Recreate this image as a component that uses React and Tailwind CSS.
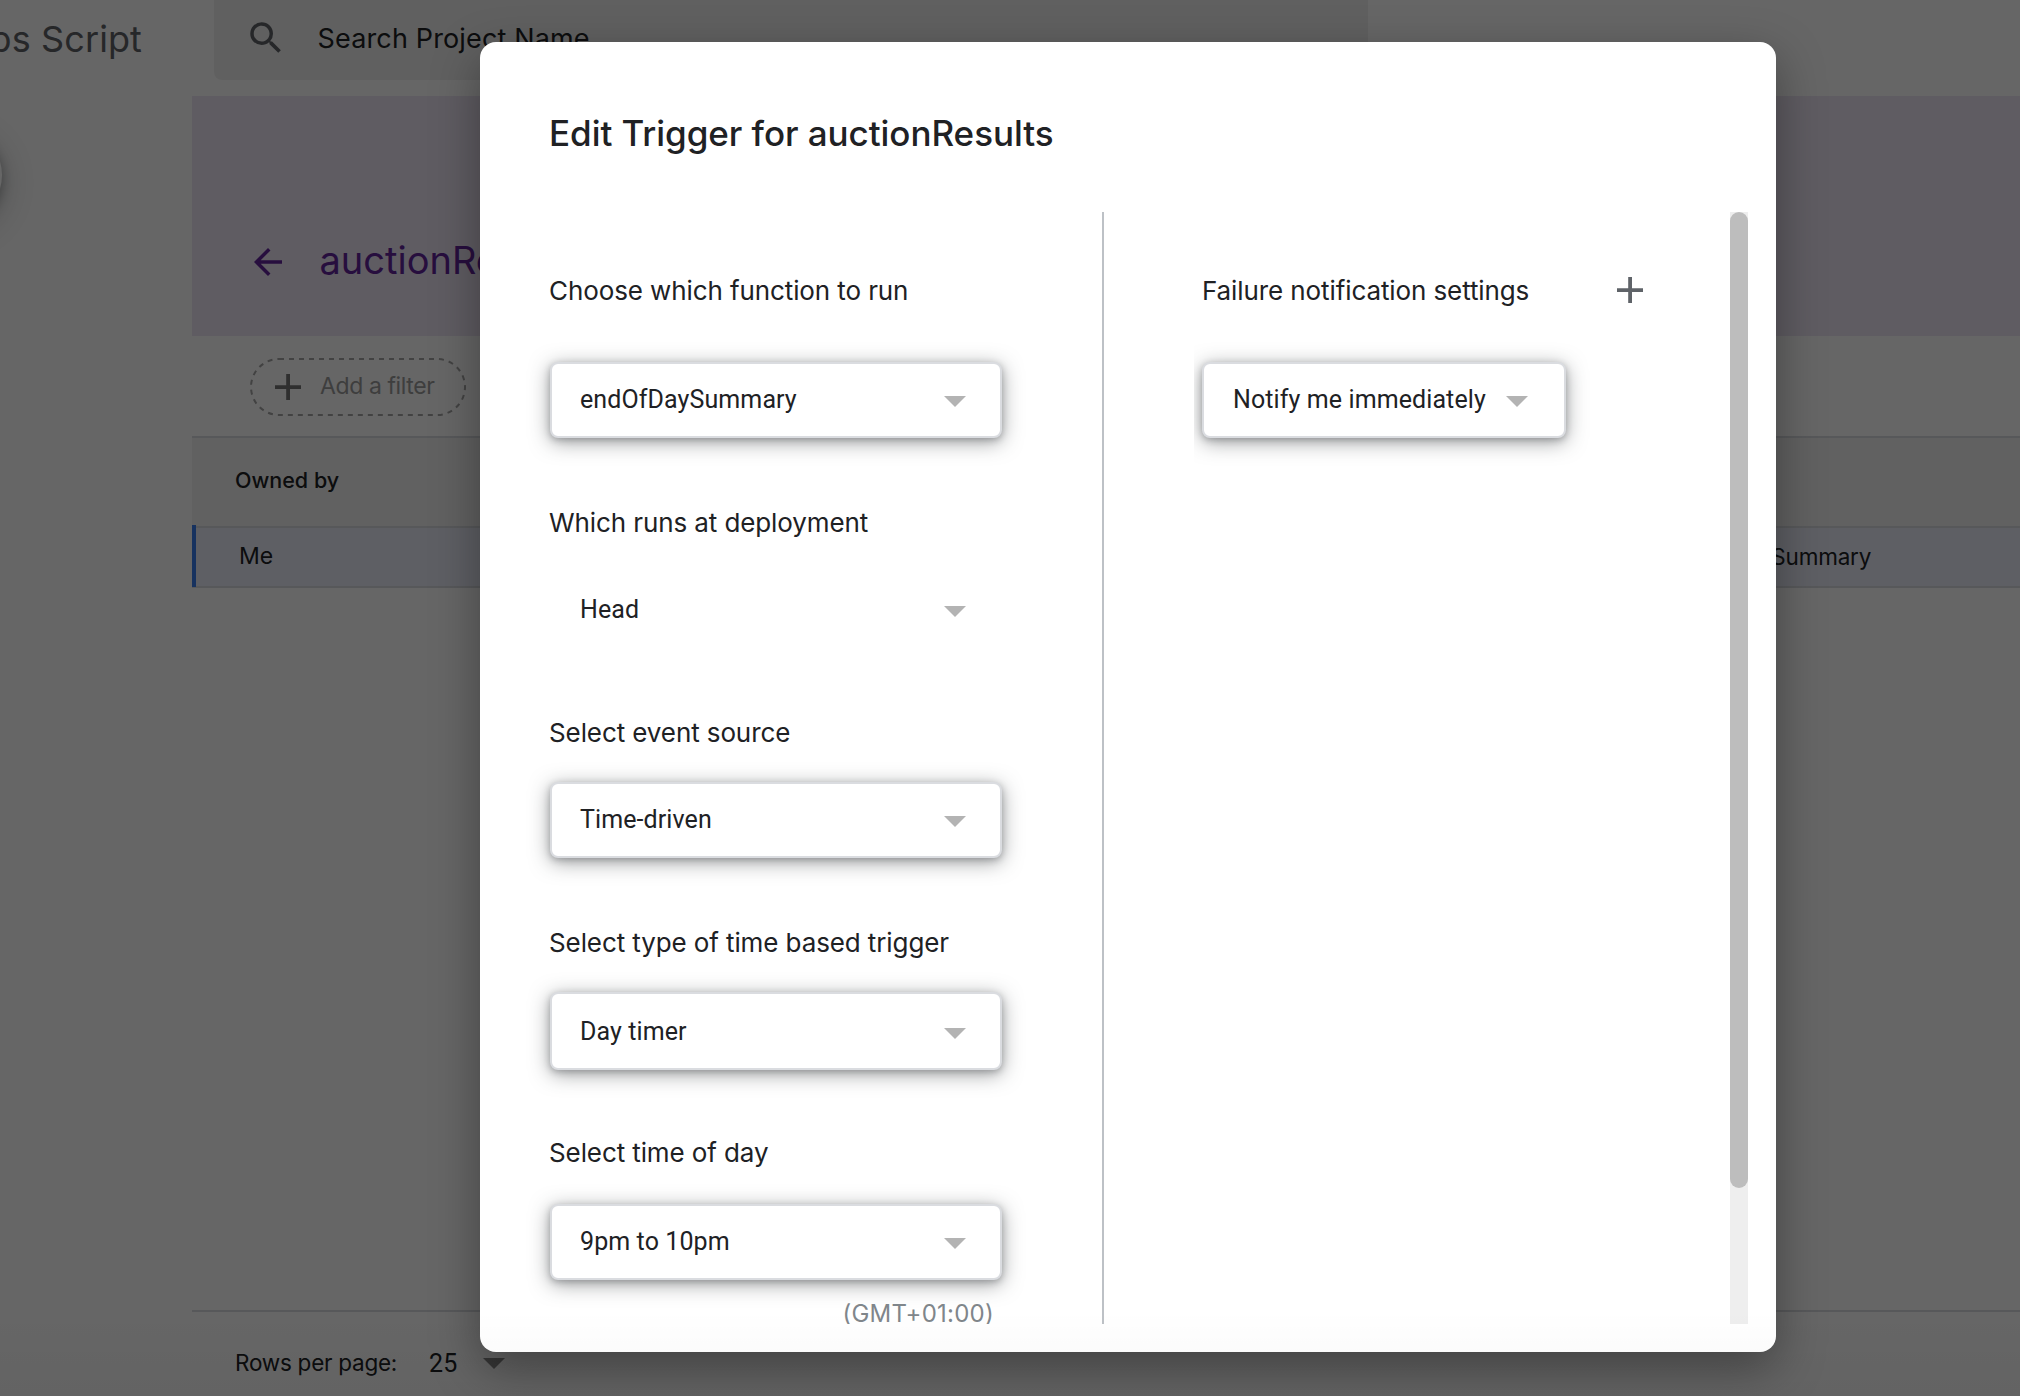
function Caret({ className }) {
  return (
    <svg className={className} width="22" height="11" viewBox="0 0 22 11">
      <path d="M0 0h22L11 11z" fill="currentColor" />
    </svg>
  );
}

function Plus({ className }) {
  return (
    <svg className={className} width="26" height="26" viewBox="0 0 26 26">
      <path d="M11.2 0h3.8v11.2h11V15H15v11h-3.8V15H0v-3.8h11.2z" fill="currentColor" />
    </svg>
  );
}

function Select({ value, flat, className }) {
  return (
    <div
      className={`flex items-center justify-between rounded-lg border-2 font-[Roboto,sans-serif] text-[25px] leading-[40px] tracking-[0.1px] text-[#202124] ${
        flat
          ? "border-transparent"
          : "border-[#dadce0] bg-white shadow-[0_2px_6px_rgba(60,64,67,0.3),0_4px_20px_rgba(60,64,67,0.5)]"
      } ${className}`}
    >
      <span>{value}</span>
      <Caret className="mt-[3px] text-[#b3b3b3]" />
    </div>
  );
}

const labelClass =
  "h-[41px] text-[26px] leading-[41px] tracking-[-0.1px] whitespace-nowrap text-[#202124]";

const fields = [
  { label: "Choose which function to run", value: "endOfDaySummary", field: "pt-[58px]", select: "mt-[51px] h-[76px]" },
  { label: "Which runs at deployment", value: "Head", flat: true, field: "pt-[64px]", select: "mt-[29px] h-[76px]" },
  { label: "Select event source", value: "Time-driven", field: "pt-[64px]", select: "mt-[29px] h-[76px]" },
  { label: "Select type of time based trigger", value: "Day timer", field: "pt-[64px]", select: "mt-[29px] h-[78px] pt-[2px]" },
  { label: "Select time of day", value: "9pm to 10pm", field: "pt-[62px]", select: "mt-[31px] h-[76px]" },
];

function Background() {
  return (
    <div className="flex h-full flex-col bg-white">
      <header className="flex h-24 shrink-0 items-start">
        <div className="flex h-20 w-[214px] items-center justify-end pr-[72px] pb-[3px] text-[36px] tracking-[0.1px] whitespace-nowrap text-[#5f6368]">
          Apps Script
        </div>
        <div className="flex h-20 w-[1154px] items-center rounded-b-lg bg-[#f1f1f1] pb-[3px] pl-[31px]">
          <svg width="42" height="42" viewBox="0 0 24 24" className="-mt-px text-[#5f6368]">
            <path
              fill="currentColor"
              d="M15.5 14h-.79l-.28-.27A6.47 6.47 0 0 0 16 9.5 6.5 6.5 0 1 0 9.5 16c1.61 0 3.09-.59 4.23-1.57l.27.28v.79l5 4.99L20.49 19l-4.99-5zm-6 0C7.01 14 5 11.99 5 9.5S7.01 5 9.5 5 14 7.01 14 9.5 11.99 14 9.5 14z"
            />
          </svg>
          <span className="mt-[2px] ml-[30.5px] text-[27px] tracking-[0.15px] text-[#202124]">Search Project Name</span>
        </div>
      </header>
      <div className="flex min-h-0 flex-1">
        <aside className="w-48 shrink-0 pt-[31px]">
          <div className="-ml-[94px] h-24 w-24 rounded-full bg-white shadow-[0_4px_12px_rgba(60,64,67,0.4),0_8px_36px_rgba(60,64,67,0.3)]" />
        </aside>
        <main className="flex flex-1 flex-col">
          <div className="h-60 bg-[#ede5f6] pt-36 pl-[55px]">
            <div className="flex h-10 items-center text-[#63259b]">
              <svg width="42" height="42" viewBox="0 0 24 24" className="mt-1">
                <path fill="currentColor" d="M20 11H7.83l5.59-5.59L12 4l-8 8 8 8 1.41-1.41L7.83 13H20v-2z" />
              </svg>
              <span className="ml-[30.5px] text-[38px]">auctionResults</span>
            </div>
          </div>
          <div className="h-[100px] pt-[22px] pl-[58px]">
            <div className="relative flex h-[58px] w-[216px] items-center pl-[25px] text-[#757575]">
              <svg className="absolute inset-0" width="216" height="58" viewBox="0 0 216 58" fill="none">
                <rect x="1" y="1" width="214" height="56" rx="28" stroke="#a5a5a5" strokeWidth="2" strokeDasharray="5 5" />
              </svg>
              <Plus className="-mt-px" />
              <span className="-mt-px ml-[19px] text-[23px] tracking-[-0.4px] text-[#9b9b9b]">Add a filter</span>
            </div>
          </div>
          <div className="flex h-[92px] items-center border-y-2 border-[#dadce0] bg-[#f3f3f3] pb-[3px] pl-[43px] text-[21.5px] font-medium text-[#202124]">
            Owned by
          </div>
          <div className="flex h-[60px] items-center border-b-2 border-[#dadce0] bg-[#ebeefb] text-[23px] text-[#202124]">
            <div className="-mt-[2px] h-[62px] w-1 shrink-0 bg-[#3a7dee]" />
            <div className="w-[1470px] shrink-0 pb-px pl-[43px]">Me</div>
            <div className="pb-px text-[22.5px] tracking-[-0.2px]">endOfDaySummary</div>
          </div>
          <div className="flex-1" />
          <footer className="flex h-[86px] items-start border-t-2 border-[#dadce0] pl-[43px] text-[#202124]">
            <span className="mt-[31px] text-[22.5px] leading-[40px] tracking-[-0.25px]">Rows per page:</span>
            <span className="mt-[32px] ml-[32px] font-[Roboto,sans-serif] text-[25px] leading-[40px]">25</span>
            <Caret className="mt-[46px] ml-[26px] text-[#8a8a8a]" />
          </footer>
        </main>
      </div>
    </div>
  );
}

function Modal() {
  return (
    <div className="absolute top-[42px] left-[480px] flex h-[1310px] w-[1296px] flex-col rounded-2xl bg-white shadow-[0_16px_48px_rgba(0,0,0,0.36)]">
      <h1 className="h-[170px] pt-[67px] pl-[69px] text-[35px] leading-[48px] font-medium tracking-[-0.05px] text-[#202124]">
        Edit Trigger for auctionResults
      </h1>
      <div className="flex h-[1112px] overflow-hidden">
        <section className="w-[624px] shrink-0 border-r-2 border-[#bdc1c6] pl-[70px]">
          <div className="w-[452px]">
            {fields.map((f) => (
              <div key={f.label} className={f.field}>
                <div className={`-ml-px ${labelClass}`}>{f.label}</div>
                <Select value={f.value} flat={f.flat} className={`pr-[34px] pl-[28px] ${f.select}`} />
              </div>
            ))}
            <div className="mt-[14px] pr-[8px] text-right text-[24px] leading-[40px] tracking-[0.25px] text-[#80868b]">
              (GMT+01:00)
            </div>
          </div>
        </section>
        <section className="ml-[90px] h-full w-[536px] overflow-hidden pt-[58px] pl-2">
          <div className="flex items-center">
            <div className={`w-[415px] ${labelClass}`}>Failure notification settings</div>
            <Plus className="-mt-px text-[#5f6368]" />
          </div>
          <Select value="Notify me immediately" className="mt-[51px] h-[76px] w-[364px] pr-[36px] pl-[29px]" />
        </section>
        <div className="h-full w-[18px] bg-[#eeeeee]">
          <div className="h-[976px] rounded-[9px] bg-[#bdbdbd]" />
        </div>
      </div>
    </div>
  );
}

export default function App() {
  return (
    <div className="relative h-[1396px] w-[2020px] overflow-hidden font-[Inter,sans-serif]">
      <Background />
      <div className="absolute inset-0 bg-black/60" />
      <Modal />
      <div className="pointer-events-none absolute inset-x-0 bottom-0 h-[86px] bg-linear-to-b from-transparent to-black/3" />
    </div>
  );
}
